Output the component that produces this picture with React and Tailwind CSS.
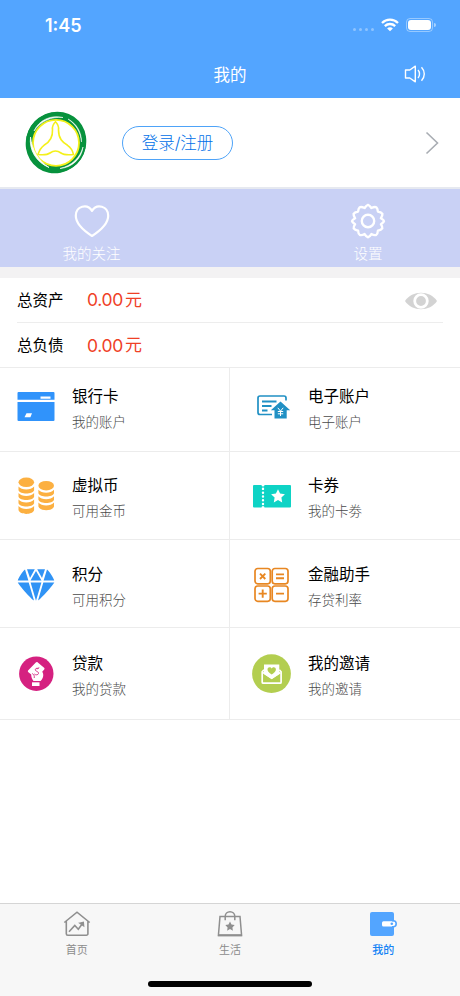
import React, { useState } from 'react';

const LogoIcon = () => (
  <svg width="64" height="64" viewBox="0 0 64 64" fill="none">
    <ellipse cx="32" cy="31.500" rx="29.800" ry="31.300" transform="rotate(35 32 31.500)" fill="#07923d" />
    <circle cx="32" cy="31.500" r="30" fill="#07923d" />
    <circle cx="32" cy="31.800" r="23" fill="#fff" stroke="#f4f01a" strokeWidth="1.800" />
    <path d="M10 20C15 9 27 3.500 39 6.500 27 5.500 17 10 10 20z" fill="#fff" stroke="#fff" strokeWidth=".6" />
    <path d="M44 8c9 5 13.500 13 13.500 23C56.500 21 52 13.500 44 8z" fill="#fff" stroke="#fff" strokeWidth=".5" />
    <path d="M59 36c-1.500 12-11 20.500-23 21.500C48 54.500 56 47 59 36z" fill="#fff" stroke="#fff" strokeWidth=".6" />
    <path d="M6.500 26C5 39 12 51 25 56.500 14 49.500 8 39 6.500 26z" fill="#fff" stroke="#fff" strokeWidth=".8" />
    <path
      d="M31.500 10.800c-2 2-3.500 4.500-3 8 .5 9-4 13-8.500 15.500-3 2-4.500 4.500-6 9.200 4.500.5 9 .7 12-1.500 3.500-2.500 7.500-2.500 11 0 3 2.200 7.500 2 12.500 1.500-1-4.700-3-7.200-6-9.200-5-3-9-6.500-9-15.500.5-3.500-1-6-3-8z"
      stroke="#f4f01a"
      strokeWidth="1.600"
    />
  </svg>
);

const CardIcon = () => (
  <svg width="40" height="40" viewBox="0 0 40 40">
    <path d="M2.500 5h35a1 1 0 0 1 1 1v6.800h-37V6a1 1 0 0 1 1-1z" fill="#3093fb" />
    <path d="M1.500 15h37v18a1 1 0 0 1-1 1h-35a1 1 0 0 1-1-1z" fill="#3093fb" />
    <path d="M24.500 9.500h10v2.300h-10zM10.500 26.300H16l-1.600 4H8.500z" fill="#fff" />
  </svg>
);

const AccountIcon = () => (
  <svg width="40" height="40" viewBox="0 0 40 40" fill="none">
    <path d="M20 27.500H8a2 2 0 0 1-2-2V11a2 2 0 0 1 2-2h24a2 2 0 0 1 2 2v2.500" stroke="#2090c4" strokeWidth="1.700" />
    <path d="M10 14.500h14.500M10 19h9.500M10 23.500h5.500" stroke="#2090c4" strokeWidth="1.800" />
    <path d="M28.500 14.600l9.700 8.700h-3.500v8.200H22.500v-8.200h-3.700z" fill="#2090c4" />
    <path d="M25.800 20.800l2.700 3.300 2.700-3.300M28.500 24v5M25.800 24.500h5.400M25.800 26.800h5.400" stroke="#fff" strokeWidth="1" />
  </svg>
);

const CoinsIcon = () => (
  <svg width="40" height="40" viewBox="0 0 40 40" fill="#fcb041">
    <ellipse cx="10.300" cy="6.300" rx="7.800" ry="4.800" />
    <path d="M2.500 10.500c3 4 12.500 4 15.600 0v3.800c-1.500 4.400-14 4.400-15.600 0z" />
    <path d="M2.500 17c3 4 12.500 4 15.600 0v3.800c-1.500 4.400-14 4.400-15.600 0z" />
    <path d="M2.500 23.500c3 4 12.500 4 15.600 0v3.800c-1.500 4.400-14 4.400-15.600 0z" />
    <path d="M2.500 30c3 4 12.500 4 15.600 0v4c-1.500 5.200-14 5.200-15.600 0z" />
    <ellipse cx="30.200" cy="9.700" rx="7.800" ry="4.800" />
    <path d="M22.400 13.800c3 4 12.500 4 15.600 0v3.500c-1.500 4.400-14 4.400-15.600 0z" />
    <path d="M22.400 20.200c3 4 12.500 4 15.600 0v3.500c-1.500 4.400-14 4.400-15.600 0z" />
    <path d="M22.400 26.500c3 4 12.500 4 15.600 0v4c-1.500 5-14 5-15.600 0z" />
  </svg>
);

const TicketIcon = () => (
  <svg width="40" height="40" viewBox="0 0 40 40">
    <path d="M2 9h7.500a1.500 1.500 0 0 0 3 0H38a1 1 0 0 1 1 1v20.500a1 1 0 0 1-1 1H12.500a1.500 1.500 0 0 0-3 0H2a1 1 0 0 1-1-1V10a1 1 0 0 1 1-1z" fill="#0ed3c5" />
    <path d="M11 12.800v16" stroke="#fff" strokeWidth="2.400" strokeLinecap="round" strokeDasharray="0.1 3.700" />
    <path d="M26 13.200l2.100 4.300 4.800.7-3.500 3.400.8 4.800-4.200-2.300-4.200 2.300.8-4.800-3.500-3.400 4.800-.7z" fill="#fff" />
  </svg>
);

const DiamondIcon = () => (
  <svg width="40" height="40" viewBox="0 0 40 40" fill="#3093f5">
    <path d="M9 4.500L12.400 15.500H1.800C2 13.500 7 6 9 4.500zM11 4.200h7.800L14 13zM21.200 4.200H29L26 13zM31 4.500c2 1.500 7 9 7.200 11H27.600zM20 6l5.500 9.500h-11z" />
    <path d="M1.800 17.500h10.900L18 35.500C15 34 2.500 19.500 1.800 17.500zM14.600 17.500h10.800L20 35.800zM27.300 17.500h11C37.500 19.500 25 34 22 35.500z" />
  </svg>
);

const CalculatorIcon = () => (
  <svg width="40" height="40" viewBox="0 0 40 40" fill="none" stroke="#e88722" strokeWidth="1.700">
    <rect x="3" y="3.500" width="15.300" height="15.300" rx="2.700" />
    <rect x="20.200" y="3.500" width="15.800" height="15.300" rx="2.700" />
    <rect x="3" y="21" width="15.300" height="15.300" rx="2.700" />
    <rect x="20.200" y="21" width="15.800" height="15.300" rx="2.700" />
    <path d="M8 8.700l5.300 5.300M13.300 8.700L8 14M24 9.400h8M24 13.200h8M10.700 24.500v8.200M6.600 28.600h8.200M24 28.600h8" strokeWidth="1.900" />
  </svg>
);

const LoanIcon = () => (
  <svg width="40" height="40" viewBox="0 0 40 40">
    <circle cx="20.300" cy="19.700" r="17.200" fill="#d52180" />
    <path d="M21.800 8.400l6.300 5.300c.6.500.6 1.200.1 1.800l-2 2.300c1.800 2.500 1.400 6.500-1.700 9.200h-7c-1.500-2-2.300-3.800-2.300-6.500l-2.800-2.300c-.7-.6-.7-1.200-.1-1.900l7.500-7.800c.6-.6 1.300-.7 2-.1z" fill="#fff" />
    <path d="M16 28.300h7.500v3.700H16z" fill="#fff" />
    <path d="M22.500 14.500c-2-.8-3.800.2-3 1.800.6 1.400 3.400 1.200 3 3.200-.4 1.600-2.800 1.800-4.200.5M23 13.300l-1.700 2M16.200 19.500c1.800 1 2.400 2.500 2 4.500" stroke="#d52180" strokeWidth=".9" fill="none" />
  </svg>
);

const InviteIcon = () => (
  <svg width="40" height="40" viewBox="0 0 40 40">
    <circle cx="19.500" cy="19.700" r="19.400" fill="#b3ce50" />
    <path d="M12 15.800l-1.800 2v10.400a1 1 0 0 0 1 1h16.900a1 1 0 0 0 1-1V17.800l-1.800-2" fill="none" stroke="#fff" strokeWidth="1.700" />
    <path d="M12 10.500h15.300V20l-7.600 5.200L12 20z" fill="#fff" />
    <path d="M19.700 20.500c-2.700-1.900-4.200-3.400-4.200-5.100 0-2.300 3-3 4.200-.9 1.200-2.100 4.200-1.400 4.200.9 0 1.700-1.500 3.200-4.200 5.100z" fill="#b3ce50" />
    <path d="M11 18.500l8.700 5.500 8.700-5.500" fill="none" stroke="#fff" strokeWidth="1.600" />
  </svg>
);

const HeartIcon = () => (
  <svg width="36" height="36" viewBox="0 0 36 36" fill="none" stroke="#fff" strokeWidth="2.200" strokeLinejoin="round">
    <path d="M18 33C11 28.500 1.800 22 1.800 12.800 1.800 3 13.300.2 18 7.800 22.700.2 34.200 3 34.200 12.800 34.200 22 25 28.500 18 33z" />
  </svg>
);

const SettingsIcon = () => (
  <svg width="36" height="36" viewBox="0 0 36 36" fill="none" stroke="#fff" strokeWidth="2.400" strokeLinejoin="round">
    <path d="M18 1.800Q19.500 2.200 21.400 5Q24.500 3.600 26.400 4.300Q27.600 5.300 27.900 8.500Q31.500 9.200 32.400 10.800Q32.600 12.500 30.900 15.300Q33.900 17 34 18Q33.800 19.500 30.900 21.200Q32.700 24 32.300 25.400Q31.200 27.200 27.900 27.700Q27.700 31 26.300 31.800Q24.500 32.600 21.400 31.100Q19.700 33.900 18 34.200Q16.300 33.900 14.600 31.100Q11.500 32.600 9.700 31.800Q8.300 31 8.100 27.700Q4.800 27.200 3.700 25.400Q3.300 24 5.100 21.200Q2.200 19.500 2 18Q2.100 17 5.100 15.300Q3.400 12.500 3.600 10.800Q4.500 9.200 8.100 8.500Q8.400 5.300 9.600 4.300Q11.500 3.600 14.600 5Q16.500 2.200 18 1.800z" />
    <circle cx="18" cy="18" r="6.200" />
  </svg>
);

const WifiIcon = () => (
  <svg width="18" height="14" viewBox="0 0 18 14" fill="none" stroke="#fff" strokeWidth="2.300">
    <path d="M1 5c4.500-4.400 11.500-4.400 16 0M3.800 8.100c3-2.800 7.400-2.800 10.400 0" />
    <path d="M9 13.300l-2.900-2.900c1.600-1.400 4.200-1.400 5.800 0z" fill="#fff" stroke="none" />
  </svg>
);

const SoundIcon = () => (
  <svg width="22" height="18" viewBox="0 0 22 18" fill="none" stroke="#fff" strokeWidth="1.400" strokeLinejoin="round">
    <path d="M1.500 5h4.300L11.300 1.200v15.600L5.800 13H1.500zM14 5c2 2.200 2 5.800 0 8M17.500 2.200c3.700 3.900 3.700 9.700 0 13.600" />
  </svg>
);

const HomeIcon = () => (
  <svg width="28" height="28" viewBox="0 0 28 28" fill="none" stroke="#8f8f8f" strokeWidth="1.600">
    <path d="M1.300 12.500L14 2.200l12.700 10.300M3.300 11v12.700a1.500 1.500 0 0 0 1.500 1.500h18.600a1.500 1.500 0 0 0 1.500-1.500V11" />
    <path d="M6 21.800l5.800-6.300 3.500 3.700 4.200-5.700" />
    <path d="M17 13.200l3.200-.8.300 3.300z" fill="#8f8f8f" />
  </svg>
);

const BagIcon = () => (
  <svg width="28" height="28" viewBox="0 0 28 28" fill="none" stroke="#8f8f8f" strokeWidth="1.500">
    <path d="M4 6.500h20L25.600 25.500H2.400z" />
    <path d="M2 25.200h24" strokeWidth="2" />
    <path d="M9.200 10.300V6.500a4.600 4.600 0 0 1 9.600 0v3.800" />
    <path d="M14 11.600l1.500 3 3.200.5-2.300 2.300.5 3.300-2.900-1.600-2.900 1.600.5-3.300-2.300-2.300 3.200-.5z" fill="#8f8f8f" stroke="none" />
  </svg>
);

const WalletIcon = () => (
  <svg width="28" height="28" viewBox="0 0 28 28">
    <rect x="1" y="2" width="24" height="24" rx="2" fill="#53a5ff" />
    <path d="M14.500 11.300h10a2.600 2.600 0 0 1 0 5.200h-10a1.500 1.500 0 0 1-1.500-1.500v-2.200a1.500 1.500 0 0 1 1.500-1.500z" fill="#fff" />
    <path d="M23 10.800h1.200a3 3 0 0 1 0 6H23" fill="none" stroke="#53a5ff" strokeWidth="1.600" />
    <circle cx="22.800" cy="13.800" r="1.300" fill="#53a5ff" />
  </svg>
);

const menu = [
  { title: '银行卡', desc: '我的账户', icon: <CardIcon />, size: 'h-[84px] pt-[15px]' },
  { title: '电子账户', desc: '电子账户', icon: <AccountIcon />, size: 'h-[84px] pt-[15px]' },
  { title: '虚拟币', desc: '可用金币', icon: <CoinsIcon />, size: 'h-[88px] pt-5' },
  { title: '卡券', desc: '我的卡劵', icon: <TicketIcon />, size: 'h-[88px] pt-5' },
  { title: '积分', desc: '可用积分', icon: <DiamondIcon />, size: 'h-[88px] pt-[21px]' },
  { title: '金融助手', desc: '存贷利率', icon: <CalculatorIcon />, size: 'h-[88px] pt-[21px]' },
  { title: '贷款', desc: '我的贷款', icon: <LoanIcon />, size: 'h-[92px] pt-[22px]' },
  { title: '我的邀请', desc: '我的邀请', icon: <InviteIcon />, size: 'h-[92px] pt-[22px]' },
];

const tabs = [
  { name: '首页', icon: <HomeIcon /> },
  { name: '生活', icon: <BagIcon /> },
  { name: '我的', icon: <WalletIcon /> },
];

const Header = () => (
  <header className="h-[98px] bg-[#53a5ff] text-white">
    <div className="flex h-[50px] items-center justify-between pl-[45px] pr-[24px]">
      <span className="pt-[2px] text-[18px] font-semibold leading-none">1:45</span>
      <div className="flex items-center">
        <div className="mr-[7px] mt-[9px] flex gap-[3px]">
          {[0, 1, 2, 3].map((dot) => (
            <i key={dot} className="h-[3px] w-[3px] rounded-full bg-white/35" />
          ))}
        </div>
        <WifiIcon />
        <div className="ml-[7px] h-[14px] w-[27px] rounded-[4px] border border-white/40 p-px">
          <div className="h-full rounded-[3px] bg-white" />
        </div>
        <i className="ml-px h-1 w-[2px] rounded-r bg-white/50" />
      </div>
    </div>
    <div className="grid h-12 grid-cols-3 items-center">
      <h1 className="col-start-2 pt-px text-center text-[16.5px] leading-6">我的</h1>
      <button className="mr-[34px] justify-self-end" title="语音">
        <SoundIcon />
      </button>
    </div>
  </header>
);

const Money = ({ label, visible, className, children }) => (
  <div className={`flex h-[45px] items-center pt-px ${className}`}>
    <span className="w-[70px] text-[15.5px]">{label}</span>
    <span className="text-[17.5px] tracking-[-0.3px] text-[#ef4026]">{visible ? '0.00' : '****'}</span>
    <span className="ml-[2px] text-[17px] text-[#ef4026]">元</span>
    {children}
  </div>
);

const App = () => {
  const [visible, setVisible] = useState(true);
  const [activeTab, setActiveTab] = useState('我的');

  return (
    <div className="flex h-[996px] w-[460px] flex-col overflow-hidden bg-white font-[Inter,'Noto_Sans_CJK_SC',sans-serif] text-black">
      <Header />

      <section className="flex h-[91px] items-center border-b-2 border-[#e6e9f0] pl-6 pr-[21px]">
        <LogoIcon />
        <button className="ml-[34px] h-[34px] w-[111px] rounded-full border border-[#4ea3f8] pt-[2px] text-[16.5px] font-light leading-none text-[#0070e8]">
          登录/注册
        </button>
        <svg className="ml-auto" width="14" height="24" viewBox="0 0 14 24" fill="none" stroke="#a9adb3" strokeWidth="1.600">
          <path d="M1.500 1.500L12.500 12 1.500 22.500" />
        </svg>
      </section>

      <section className="flex h-[78px] justify-between bg-[#c9d1f5] pt-[14px] text-[14.5px] font-light text-white">
        <button className="flex w-[183px] flex-col items-center">
          <HeartIcon />
          <span className="mt-[5px] leading-5">我的关注</span>
        </button>
        <button className="flex w-[184px] flex-col items-center">
          <SettingsIcon />
          <span className="mt-[5px] leading-5">设置</span>
        </button>
      </section>
      <div className="h-[11px] bg-[#f3f2f3]" />

      <section className="px-[17px]">
        <Money label="总资产" visible={visible} className="border-b border-[#ededed]">
          <button className="ml-auto mr-[6px]" onClick={() => setVisible(!visible)} title="显示金额">
            <svg width="32" height="18" viewBox="0 0 32 18">
              <path d="M0 9C7-2 25-2 32 9 25 20 7 20 0 9z" fill="#d3d3d3" />
              <circle cx="16" cy="9" r="6.300" fill="#d3d3d3" stroke="#fff" strokeWidth="2.800" />
            </svg>
          </button>
        </Money>
        <Money label="总负债" visible={visible} className="" />
      </section>

      <section className="-mt-px grid grid-cols-2 border-t border-[#ececec]">
        {menu.map((item, index) => (
          <button
            key={index}
            className={`flex items-start border-b border-[#ececec] text-left ${item.size} ${
              index % 2 === 0 ? 'border-r pl-4' : 'pl-[22px]'
            }`}
          >
            <span className="mr-4 mt-1">{item.icon}</span>
            <span className="flex flex-col">
              <span className="text-[15.5px] leading-[27px]">{item.title}</span>
              <span className="text-[13.5px] font-light leading-6 text-[#4a4a4a]">{item.desc}</span>
            </span>
          </button>
        ))}
      </section>

      <nav className="mt-auto flex h-[93px] flex-col items-center border-t border-[#d5d5d5] bg-[#f7f7f7]">
        <div className="grid w-full grid-cols-3">
          {tabs.map((tab) => (
            <button
              key={tab.name}
              onClick={() => setActiveTab(tab.name)}
              className={`flex flex-col items-center pt-[6px] text-[11px] ${
                activeTab === tab.name ? 'font-medium text-[#1583f5]' : 'text-[#8c8c8c]'
              }`}
            >
              {tab.icon}
              <span className="mt-1 leading-4">{tab.name}</span>
            </button>
          ))}
        </div>
        <div className="mb-[9px] mt-auto h-[6px] w-[164px] rounded-full bg-black" />
      </nav>
    </div>
  );
};

export default App;
